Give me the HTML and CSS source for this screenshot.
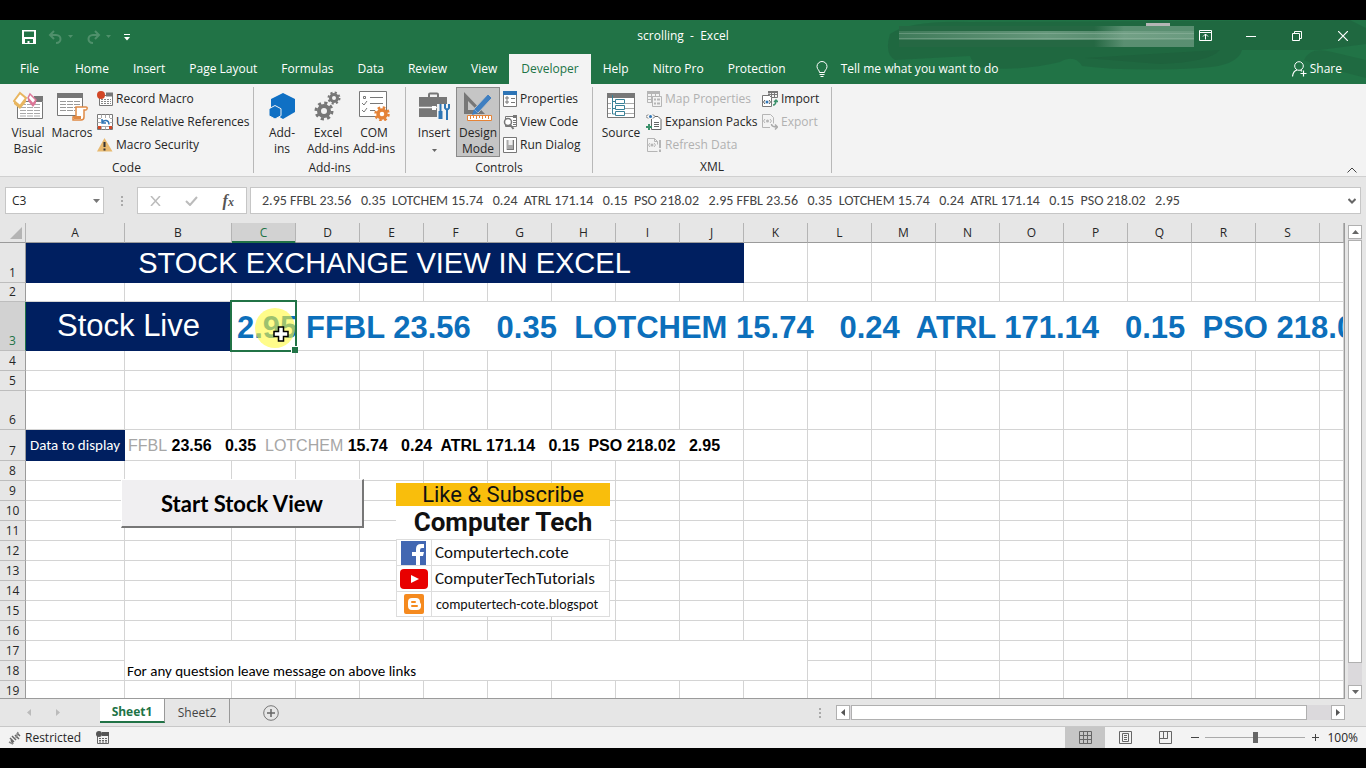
FILE: index.html
```html
<!DOCTYPE html>
<html lang="en">
<head>
<meta charset="UTF-8" />
<meta name="viewport" content="width=device-width, initial-scale=1" />
<title>scrolling - Excel</title>
<link rel="stylesheet" href="styles.css">
</head>
<body>
<header class="top">
  <svg class="smudge" width="486" height="64" viewBox="0 0 486 64" aria-hidden="true">
    <path d="M10 14 Q30 0 90 2 L470 0 L486 8 L486 24 L440 30 L362 30 Q358 46 320 48 Q250 52 202 46 Q195 34 180 42 Q140 52 95 47 L90 36 L15 40 Q4 34 10 14z" fill="#1b5135" opacity=".3"/>
    <path d="M424 40 Q430 26 452 32 L486 40 V58 L440 46z" fill="#1b5135" opacity=".25"/>
    <path d="M205 38 Q270 34 340 30 Q330 42 280 44z" fill="#1b5135" opacity=".25"/>
    <defs>
      <linearGradient id="streak"><stop offset="0" stop-color="#8fb59f" stop-opacity=".25"/><stop offset=".5" stop-color="#8fb59f" stop-opacity=".6"/><stop offset="1" stop-color="#8fb59f" stop-opacity=".3"/></linearGradient>
      <linearGradient id="fade"><stop offset="0" stop-color="#8fb59f" stop-opacity="0"/><stop offset=".3" stop-color="#8fb59f" stop-opacity=".5"/><stop offset="1" stop-color="#8fb59f" stop-opacity=".5"/></linearGradient>
    </defs>
    <path d="M19 6H314V27H19z" fill="#256843"/>
    <path d="M19 11H314V20H19z" fill="url(#streak)"/>
    <path d="M214 6H314V27H214z" fill="url(#fade)"/>
    <path d="M19 13.500H314M19 18.500H314" stroke="#a5c5b2" stroke-width="1" opacity=".35"/>
    <path d="M266 3H290V6H266z" fill="#b5b5b5"/>
  </svg>
  <div class="titlebar">
    <div class="quick">
      <button aria-label="Save"><svg width="14" height="14" viewBox="0 0 14 14"><path d="M0 0H14V14H0zM2 1.500V7H12V1.500zM3 9V13H5.500V11H7.500V13H11V9z" fill="#fff" fill-rule="evenodd"/></svg></button>
      <button class="off" aria-label="Undo"><svg width="26" height="14" viewBox="0 0 26 14"><path d="M6 1 2 5l4 4M2 5h6c6 0 6 8 0 8" fill="none" stroke="#4f906b" stroke-width="2"/><path d="M20 5h5l-2.500 3z" fill="#4f906b"/></svg></button>
      <button class="off" aria-label="Redo"><svg width="26" height="14" viewBox="0 0 26 14"><path d="M9 1l4 4-4 4M13 5H7c-6 0-6 8 0 8" fill="none" stroke="#4f906b" stroke-width="2"/><path d="M20 5h5l-2.500 3z" fill="#4f906b"/></svg></button>
      <button aria-label="Customize Quick Access Toolbar"><svg width="6" height="8" viewBox="0 0 6 8"><path d="M0 1.500h6" stroke="#fff"/><path d="M0 4h6L3 7.500z" fill="#fff"/></svg></button>
    </div>
    <div class="doc">scrolling&nbsp; -&nbsp; Excel</div>
    <div class="winbtns">
      <button aria-label="Ribbon Display Options"><svg width="13" height="11" viewBox="0 0 13 11"><path d="M.5.5h12v10H.5zM.5 2.500h12M6.500 9.500V4M4 6.500 6.500 4 9 6.500" fill="none" stroke="#fff"/></svg></button>
      <button aria-label="Minimize"><svg width="10" height="10" viewBox="0 0 10 10"><path d="M0 5.500h10" stroke="#fff"/></svg></button>
      <button aria-label="Restore"><svg width="10" height="10" viewBox="0 0 10 10"><path d="M.5 2.500h7v7h-7zM2.500 2.500v-2h7v7h-2" fill="none" stroke="#fff"/></svg></button>
      <button aria-label="Close"><svg width="10" height="10" viewBox="0 0 10 10"><path d="M0 0 10 10M10 0 0 10" stroke="#fff" stroke-width="1.200"/></svg></button>
    </div>
  </div>
  <nav class="tabs">
    <a class="file" href="#file">File</a>
    <a href="#home">Home</a>
    <a href="#insert">Insert</a>
    <a href="#layout">Page Layout</a>
    <a href="#formulas">Formulas</a>
    <a href="#data">Data</a>
    <a href="#review">Review</a>
    <a href="#view">View</a>
    <a class="active" href="#developer">Developer</a>
    <a href="#help">Help</a>
    <a href="#nitro">Nitro Pro</a>
    <a href="#protection">Protection</a>
    <a class="tell" href="#tell"><svg width="12" height="16" viewBox="0 0 12 16"><path d="M3.500 11.500C3.500 9 1 8.500 1 5.500a5 5 0 0 1 10 0c0 3-2.500 3.500-2.500 6zM3.500 13.500h5M4.500 15.500h3" fill="none" stroke="#fff"/></svg>Tell me what you want to do</a>
    <a class="share" href="#share"><svg width="15" height="16" viewBox="0 0 15 16"><circle cx="7" cy="5" r="4.300" fill="none" stroke="#fff"/><path d="M.5 15.500C1 11 3 9.500 5 9M8.500 9.200l1.500 1M11.500 9.500v6M8.500 12.500h6" fill="none" stroke="#fff" stroke-width="1.200"/></svg>Share</a>
  </nav>
</header>

<section class="ribbon">
  <div class="group code">
    <div class="tools">
      <button class="big"><svg width="30" height="28" viewBox="0 0 30 28"><path d="M4.500 9.500h25v17h-25z" fill="#fff" stroke="#777"/><path d="M21 4h9v5h-9z" fill="#777"/><path d="M7 12.500h21M7 15.500h21M7 18.500h21M7 21.500h21M7 24h21" stroke="#aaa" stroke-dasharray="6 1"/><path d="M7 1 13 6 7 14 1 9z" fill="#fff" stroke="#e8b660" stroke-width="2"/><path d="M1 9l6 5 6-8v4l-6 7-6-5z" fill="#e8b660"/><path d="M17 2l6 6-3 4-5-6z" fill="#fff" stroke="#dc7798" stroke-width="1.500"/><path d="M15 6l5 6 3-4v3l-3 4-5-6z" fill="#dc7798"/></svg><span>Visual<br>Basic</span></button>
      <button class="big"><svg width="32" height="28" viewBox="0 0 32 28"><path d="M1.500 1.500h25v22h-25z" fill="#fff" stroke="#777"/><path d="M1 1h26v5H1z" fill="#777"/><path d="M4 9.500h20M4 12.500h20M4 15.500h20M4 18.500h15" stroke="#999" stroke-dasharray="6 1"/><path d="M20 15h10c2 0 1 3 0 3h-2v7c0 3-2 3-3 3h-8v-3h3z" fill="#fff" stroke="#e08a45" stroke-width="1.500"/><path d="M17 24h8v3h-7z" fill="#e08a45"/></svg><span>Macros</span></button>
      <div class="stack">
        <button><svg width="16" height="16" viewBox="0 0 16 16"><path d="M2.500 4.500h13v10h-13z" fill="#fff" stroke="#777"/><path d="M9 1.500h7v4H9z" fill="#777"/><path d="M4 8.500h10M4 10.500h10M4 12.500h10" stroke="#888" stroke-dasharray="2 1"/><circle cx="4" cy="4" r="4" fill="#d24726"/></svg>Record Macro</button>
        <button><svg width="16" height="16" viewBox="0 0 16 16"><path d="M.5.5h15v15H.5z" fill="#fff" stroke="#777"/><path d="M.5 4.500h15M.5 8.500h15M.5 12.500h15M4.500.5v15M8.500.5v15M12.500.5v15" stroke="#aaa"/><path d="M4 4h9v8H4z" fill="#fff"/><path d="M1 12h3v3H1zM12 12h3v3h-3z" fill="#d24726"/><path d="M12 10.500c0-5-5-5-7-2M5 5v4h4" fill="none" stroke="#2e75b6" stroke-width="1.500"/></svg>Use Relative References</button>
        <button><svg width="16" height="16" viewBox="0 0 16 16"><path d="M7.500 1 15.500 14.500H0z" fill="#e8b96f"/><path d="M7.500 5v5M7.500 11.500v2" stroke="#333" stroke-width="2"/></svg>Macro Security</button>
      </div>
    </div>
    <div class="caption">Code</div>
  </div>
  <div class="group addins">
    <div class="tools spaced">
      <button class="big"><svg width="28" height="28" viewBox="0 0 28 28"><path d="M15 1 27 7V20L15 27 3 20V7z" fill="#0f70c4"/><path d="M7 13.500l6 3.200v7L7 27l-6-3.300v-7z" fill="#0f70c4" stroke="#f3f3f3"/></svg><span>Add-<br>ins</span></button>
      <button class="big"><svg width="28" height="30" viewBox="0 0 28 30"><circle cx="10" cy="20" r="5" fill="none" stroke="#777" stroke-width="4"/><circle cx="10" cy="20" r="8" fill="none" stroke="#777" stroke-width="3" stroke-dasharray="3.140 3.140"/><circle cx="20" cy="7" r="3.500" fill="none" stroke="#777" stroke-width="3"/><circle cx="20" cy="7" r="5.500" fill="none" stroke="#777" stroke-width="2" stroke-dasharray="2.160 2.160"/></svg><span>Excel<br>Add-ins</span></button>
      <button class="big"><svg width="32" height="30" viewBox="0 0 32 30"><path d="M1.500.5h27v25h-27z" fill="#fff" stroke="#777"/><path d="M5.500 5.500h2v2h-2zM4 12l2 2 3-4M4 19l2 2 3-4M12 6.500h13M12 12.500h13M12 19.500h5" fill="none" stroke="#777"/><circle cx="24" cy="23" r="4" fill="#fff" stroke="#e58337" stroke-width="3.500"/><circle cx="24" cy="23" r="6.500" fill="none" stroke="#e58337" stroke-width="2.500" stroke-dasharray="2.550 2.550"/></svg><span>COM<br>Add-ins</span></button>
    </div>
    <div class="caption">Add-ins</div>
  </div>
  <div class="group controls">
    <div class="tools">
      <button class="big"><svg width="32" height="30" viewBox="0 0 32 30"><path d="M11 6V3.500q0-1 1-1h7q1 0 1 1V6" fill="none" stroke="#777" stroke-width="2"/><path d="M1 6h28v20H1z" fill="#777"/><path d="M1 16.500h13m4 0h11" stroke="#f3f3f3" stroke-width="1.500"/><path d="M14 15h4v4h-4z" fill="#fff"/><path d="M19 13h13v16H19z" fill="#f3f3f3"/><path d="M22.500 13v7" stroke="#2f76b5" stroke-width="2"/><path d="M22.500 20v8" stroke="#2f76b5" stroke-width="4"/><path d="M29 18v11M27 13v4q2 3 4 0v-4" fill="none" stroke="#2f76b5" stroke-width="2"/></svg><span>Insert</span><svg class="drop" width="5" height="3" viewBox="0 0 5 3"><path d="M0 0h5L2.500 3z" fill="#666"/></svg></button>
      <button class="big pressed"><svg width="32" height="30" viewBox="0 0 32 30"><path d="M2 1 23 23H2zM6 10v9h9z" fill="#777" fill-rule="evenodd"/><path d="M12 18 26 3l4 4-14 15z" fill="#3f7fc1" stroke="#c5c5c5"/><path d="M12 18l4 4-6 2z" fill="#3f7fc1"/><path d="M5.500 24.500h24v5h-24z" fill="#fff" stroke="#e58337"/><path d="M8.500 25v3M11.500 25v2M14.500 25v3M17.500 25v2M20.500 25v3M23.500 25v2M26.500 25v3" stroke="#e58337"/></svg><span>Design<br>Mode</span></button>
      <div class="stack">
        <button><svg width="14" height="16" viewBox="0 0 14 16"><path d="M.5.5h13v15H.5z" fill="#fff" stroke="#777"/><path d="M0 0h14v4H0z" fill="#2e75b6"/><path d="M3 6h2v2H3zM3 10h2v2H3z" fill="none" stroke="#777"/><path d="M8 7.500h4M8 11.500h4" stroke="#777"/></svg>Properties</button>
        <button><svg width="14" height="16" viewBox="0 0 14 16"><path d="M2.500 2.500h11v10h-11z" fill="#fff" stroke="#777"/><path d="M10 1h4v3h-4z" fill="#777"/><path d="M10 6.500h3M10 8.500h3M10 10.500h3" stroke="#777"/><circle cx="5" cy="8" r="3.500" fill="#fff" stroke="#777" stroke-width="1.500"/><path d="M7 10.500 10.500 15" stroke="#777" stroke-width="2"/></svg>View Code</button>
        <button><svg width="14" height="16" viewBox="0 0 14 16"><path d="M.5.5h13v15H.5z" fill="#fff" stroke="#777"/><path d="M3.500 3h7v10h-7z" fill="#aaa"/><path d="M5.500 3h4v5h-4z" fill="#eee"/><path d="M10.500 3v10M4 12.500h7" stroke="#777"/></svg>Run Dialog</button>
      </div>
    </div>
    <div class="caption">Controls</div>
  </div>
  <div class="group xml">
    <div class="tools">
      <button class="big"><svg width="30" height="28" viewBox="0 0 30 28"><path d="M1.500 1.500h27v24h-27z" fill="#fff" stroke="#777"/><path d="M1 1h28v5H1z" fill="#777"/><path d="M19 11.500h9M19 16.500h9M19 21.500h9M2 11.500h3M2 16.500h3M2 21.500h3" stroke="#aaa"/><path d="M6.500 3v19h3M6.500 9.500h3M6.500 16.500h3M9.500 7.500h9v4h-9zM9.500 13.500h9v4h-9zM9.500 19.500h9v4h-9z" fill="#fff" stroke="#3a8298"/></svg><span>Source</span></button>
      <div class="stack first">
        <button disabled><svg width="16" height="16" viewBox="0 0 16 16"><path d="M1.500.5h12v11h-12zM1 5.500h12M1 8.500h12M5.500.5v11M9.500.5v11" fill="none" stroke="#b5b5b5"/><path d="M1 0h13v3H1z" fill="#b5b5b5"/><path d="M6.500 5.500h9v10h-9z" fill="#f3f3f3" stroke="#b5b5b5"/><path d="M8 8.500h2M8 12.500h2M11 8.500h3M11 12.500h3" stroke="#b5b5b5" stroke-width="2"/></svg>Map Properties</button>
        <button><svg width="16" height="16" viewBox="0 0 16 16"><path d="M9 2.500h3l3 3v10H5.500V5" fill="#fff" stroke="#666"/><path d="M8 8.500h5M8 10.500h5M8 12.500h5" stroke="#666"/><path d="M2 .5 0 2.500l2 2M7 .5l2 2-2 2" fill="none" stroke="#666"/><circle cx="4.500" cy="2.500" r="1.500" fill="#2e75b6"/><path d="M3 10v6M0 13h6" stroke="#3b916b" stroke-width="2"/></svg>Expansion Packs</button>
        <button disabled><svg width="16" height="16" viewBox="0 0 16 16"><path d="M11.500 14.500h-10v-13h7l3 3v3M8.500 1.500v3h3" fill="none" stroke="#b5b5b5"/><path d="M4 6 2.500 8 4 10M8 6l1.500 2L8 10" fill="none" stroke="#b5b5b5"/><circle cx="6" cy="8" r="1.500" fill="#b5b5b5"/><path d="M14 3v8M14 12.500v2.500" stroke="#b5b5b5" stroke-width="2"/></svg>Refresh Data</button>
      </div>
      <div class="stack">
        <button><svg width="16" height="16" viewBox="0 0 16 16"><path d="M7 .5h8.500v6H7zM6 3.500h9M9.500.5v6M12.500.5v6" fill="none" stroke="#777"/><path d="M6 0h10v2H6z" fill="#777"/><path d="M.5 4.500h7l2 2v9H.5z" fill="#fff" stroke="#777"/><path d="M3 9 1.500 11 3 13M7 9l1.500 2L7 13" fill="none" stroke="#555"/><circle cx="5" cy="11" r="1.500" fill="#2e75b6"/><path d="M11 14q3 0 3-5M12 11l2-2 2 2" fill="none" stroke="#3b916b" stroke-width="1.500"/></svg>Import</button>
        <button disabled><svg width="16" height="16" viewBox="0 0 16 16"><path d="M8 13.500H.5V.5h8l3 3v6" fill="none" stroke="#b5b5b5"/><path d="M3 5 1.500 7 3 9M8 5l1.500 2L8 9" fill="none" stroke="#b5b5b5"/><circle cx="5.500" cy="7" r="1.500" fill="#b5b5b5"/><path d="M9.500 10q0 3 5.500 3M13 10.500l2.500 2.500L13 15.500" fill="none" stroke="#aaa" stroke-width="1.500"/></svg>Export</button>
      </div>
    </div>
    <div class="caption">XML</div>
  </div>
  <button class="collapse" aria-label="Collapse the Ribbon"><svg width="10" height="6" viewBox="0 0 10 6"><path d="M.5 5.500 5 1l4.500 4.500" fill="none" stroke="#444"/></svg></button>
</section>

<section class="formula">
  <div class="namebox">
    <input aria-label="Name Box" value="C3">
    <button aria-label="Names"><svg width="7" height="4" viewBox="0 0 7 4"><path d="M0 0h7L3.500 4z" fill="#777"/></svg></button>
  </div>
  <span class="dots"></span>
  <div class="fx">
    <button aria-label="Cancel"><svg width="11" height="10" viewBox="0 0 11 10"><path d="M1 0l9 10M10 0 1 10" stroke="#bbb" stroke-width="1.500"/></svg></button>
    <button aria-label="Enter"><svg width="13" height="10" viewBox="0 0 13 10"><path d="M1 5l4 4 7-8" fill="none" stroke="#bbb" stroke-width="2"/></svg></button>
    <button class="fn" aria-label="Insert Function"><i>f</i><i class="x">x</i></button>
  </div>
  <div class="fbox">
    <input aria-label="Formula Bar" value="2.95 FFBL 23.56   0.35  LOTCHEM 15.74   0.24  ATRL 171.14   0.15  PSO 218.02   2.95 FFBL 23.56   0.35  LOTCHEM 15.74   0.24  ATRL 171.14   0.15  PSO 218.02   2.95">
    <button aria-label="Expand Formula Bar"><svg width="8" height="6" viewBox="0 0 8 6"><path d="M.5 1 4 4.500 7.500 1" fill="none" stroke="#666" stroke-width="2"/></svg></button>
  </div>
</section>

<main class="book">
  <div class="sheet">
    <table>
      <colgroup><col class="rh"><col class="ca"><col class="cb"><col span="17" class="cc"><col></colgroup>
      <thead>
        <tr><th class="corner"><svg width="12" height="12" viewBox="0 0 12 12"><path d="M12 0V12H0z" fill="#b4b4b4"/></svg></th><th>A</th><th>B</th><th class="sel">C</th><th>D</th><th>E</th><th>F</th><th>G</th><th>H</th><th>I</th><th>J</th><th>K</th><th>L</th><th>M</th><th>N</th><th>O</th><th>P</th><th>Q</th><th>R</th><th>S</th><th></th></tr>
      </thead>
      <tbody>
        <tr class="r1" data-blank="10"><th>1</th><td class="navy heading" colspan="10">STOCK EXCHANGE VIEW IN EXCEL</td></tr>
        <tr class="r2" data-blank="20"><th>2</th></tr>
        <tr class="r3"><th class="sel">3</th><td class="navy heading live" colspan="2">Stock Live</td><td class="ticker" colspan="18">2.95 FFBL 23.56   0.35  LOTCHEM 15.74   0.24  ATRL 171.14   0.15  PSO 218.02</td></tr>
        <tr data-blank="20"><th>4</th></tr>
        <tr data-blank="20"><th>5</th></tr>
        <tr class="r6" data-blank="20"><th>6</th></tr>
        <tr class="r7" data-blank="10"><th>7</th><td class="navy label">Data to display</td><td class="source" colspan="9"><span>FFBL</span> 23.56   0.35  <span>LOTCHEM</span> 15.74   0.24  ATRL 171.14   0.15  PSO 218.02   2.95</td></tr>
        <tr data-blank="20"><th>8</th></tr>
        <tr data-blank="20"><th>9</th></tr>
        <tr data-blank="20"><th>10</th></tr>
        <tr data-blank="20"><th>11</th></tr>
        <tr data-blank="20"><th>12</th></tr>
        <tr data-blank="20"><th>13</th></tr>
        <tr data-blank="20"><th>14</th></tr>
        <tr data-blank="20"><th>15</th></tr>
        <tr data-blank="20"><th>16</th></tr>
        <tr data-blank="9"><th>17</th><td></td><td class="note" colspan="10" rowspan="2">For any questsion leave message on above links</td></tr>
        <tr data-blank="10"><th>18</th></tr>
        <tr data-blank="20"><th>19</th></tr>
      </tbody>
    </table>
    <div class="selection"></div>
    <div class="halo"></div>
    <svg class="pointer" width="16" height="16" viewBox="0 0 16 16"><path d="M5.500 1h5v4.500H15v5h-4.500V15h-5v-4.500H1v-5h4.500z" fill="#fff" stroke="#000" stroke-width="1.500"/></svg>
    <button class="start">Start Stock View</button>
    <div class="card">
      <div class="like">Like &amp; Subscribe</div>
      <div class="brand">Computer Tech</div>
      <a href="#facebook"><span><svg width="26" height="24" viewBox="0 0 26 24"><path d="M0 0h25v24H0z" fill="#4267b2"/><path d="M15 24v-9h-4v-4h4V8q0-5 5-5h3v4h-2q-2 0-2 2v2h4l-1 4h-3v9z" fill="#fff"/></svg></span>Computertech.cote</a>
      <a href="#youtube"><span><svg width="28" height="20" viewBox="0 0 28 20"><rect width="28" height="20" rx="4" fill="#e80000"/><path d="M11 6l8 4-8 4z" fill="#fff"/></svg></span>ComputerTechTutorials</a>
      <a class="small" href="#blog"><span><svg width="20" height="20" viewBox="0 0 20 20"><rect width="20" height="20" rx="2" fill="#f58a1f"/><path d="M8 4h4q4 0 4 4 0 1 1 2v2q0 4-4 4H8q-4 0-4-4V8q0-4 4-4z" fill="#fff"/><path d="M8 8h3M8 12h5" stroke="#f58a1f" stroke-width="2" stroke-linecap="round"/></svg></span>computertech-cote.blogspot</a>
    </div>
  </div>
  <div class="vscroll">
    <button aria-label="Scroll up"><svg width="7" height="4" viewBox="0 0 7 4"><path d="M0 4h7L3.500 0z" fill="#666"/></svg></button>
    <div class="track"><div class="thumb"></div></div>
    <button aria-label="Scroll down"><svg width="7" height="4" viewBox="0 0 7 4"><path d="M0 0h7L3.500 4z" fill="#666"/></svg></button>
  </div>
</main>

<section class="sheetbar">
  <div class="arrows">
    <button aria-label="Previous sheet"><svg width="4" height="7" viewBox="0 0 4 7"><path d="M4 0v7L0 3.500z" fill="#bbb"/></svg></button>
    <button aria-label="Next sheet"><svg width="4" height="7" viewBox="0 0 4 7"><path d="M0 0v7l4-3.500z" fill="#bbb"/></svg></button>
  </div>
  <button class="stab on">Sheet1</button>
  <button class="stab">Sheet2</button>
  <button class="add" aria-label="New sheet"><svg width="16" height="16" viewBox="0 0 16 16"><circle cx="8" cy="8" r="7.300" fill="none" stroke="#777"/><path d="M8 4v8M4 8h8" stroke="#666" stroke-width="1.500"/></svg></button>
  <span class="dots"></span>
  <div class="hscroll">
    <button aria-label="Scroll left"><svg width="4" height="7" viewBox="0 0 4 7"><path d="M4 0v7L0 3.500z" fill="#555"/></svg></button>
    <div class="track"><div class="thumb"></div></div>
    <button aria-label="Scroll right"><svg width="4" height="7" viewBox="0 0 4 7"><path d="M0 0v7l4-3.500z" fill="#555"/></svg></button>
  </div>
</section>

<footer class="status">
  <svg width="14" height="14" viewBox="0 0 14 14"><path d="M2 7l4 4M4 5l4 4M7 4l4 4M9 2l3 3M3 9l2 4" stroke="#666" stroke-width="1.500"/><path d="M1 11l4 2M10 1l-2 6" stroke="#888" stroke-width="1.500"/></svg>
  <span class="mode">Restricted</span>
  <button class="rec" aria-label="Record Macro"><svg width="14" height="14" viewBox="0 0 14 14"><path d="M1.500 5v7.500h11V2.500H7" fill="none" stroke="#666"/><path d="M6 1h7v4H6z" fill="#555"/><path d="M3 7.500h8M3 9.500h8M3 11h8" stroke="#666" stroke-dasharray="2 1"/><circle cx="3" cy="3" r="3" fill="#555"/></svg></button>
  <div class="views">
    <button class="on" aria-label="Normal"><svg width="13" height="13" viewBox="0 0 13 13"><path d="M.5.5h12v12H.5zM.5 4.500h12M.5 8.500h12M4.500.5v12M8.500.5v12" fill="none" stroke="#666"/></svg></button>
    <button aria-label="Page Layout"><svg width="13" height="13" viewBox="0 0 13 13"><path d="M.5.5h12v12H.5zM3.500 2.500h6v8h-6zM5 4.500h3M5 6.500h3M5 8.500h3" fill="none" stroke="#666"/></svg></button>
    <button aria-label="Page Break Preview"><svg width="13" height="13" viewBox="0 0 13 13"><path d="M.5.5h12v12H.5zM4.500.5v7h4v-7M.5 7.500h8" fill="none" stroke="#666"/></svg></button>
  </div>
  <button class="zoom" aria-label="Zoom out"><svg width="8" height="8" viewBox="0 0 8 8"><path d="M0 3.500h8" stroke="#444"/></svg></button>
  <input type="range" aria-label="Zoom" min="0" max="200" value="100">
  <button class="zoom" aria-label="Zoom in"><svg width="7" height="7" viewBox="0 0 7 7"><path d="M0 3.500h7M3.500 0v7" stroke="#444"/></svg></button>
  <span class="percent">100%</span>
</footer>

<script>
  // fill each row with its empty cells
  document.querySelectorAll("tr[data-blank]").forEach(row => {
    for (let i = 0; i < row.dataset.blank; i++) {
      row.appendChild(document.createElement("td"));
    }
  });
</script>
</body>
</html>
```
FILE: styles.css
```css
* {
  box-sizing: border-box;
}
body {
  margin: 0;
  height: 100vh;
  padding: 20px 0;
  background: #000;
  display: flex;
  flex-direction: column;
  font-family: "Segoe UI", "Open Sans", "Noto Sans", sans-serif;
  font-size: 12px;
  color: #262626;
  overflow: hidden;
}
button, input {
  font: inherit;
  color: inherit;
  background: none;
  border: none;
  padding: 0;
  margin: 0;
  outline: none;
}
button {
  display: flex;
  align-items: center;
  justify-content: center;
}
a {
  color: inherit;
  text-decoration: none;
}
svg {
  display: block;
  flex: none;
}

/* title bar and tabs */
.top {
  position: relative;
  background: #217346;
  color: #fff;
  flex: none;
}
.smudge {
  position: absolute;
  top: 0;
  right: 0;
}
.titlebar {
  position: relative;
  height: 34px;
  padding-bottom: 3px;
  display: grid;
  grid-template-columns: 1fr auto 1fr;
  align-items: center;
}
.quick {
  display: flex;
  align-items: center;
  gap: 12px;
  padding: 2px 0 0 22px;
}
.quick .off {
  width: 26px;
}
.winbtns {
  display: flex;
  justify-content: flex-end;
}
.winbtns button {
  width: 46px;
}
.tabs {
  position: relative;
  display: flex;
  height: 30px;
  line-height: 30px;
}
.tabs a {
  padding: 0 12px;
  white-space: nowrap;
}
.tabs .file {
  padding: 0 24px 0 20px;
}
.tabs .active {
  background: #f3f3f3;
  color: #217346;
}
.tabs .tell, .tabs .share {
  display: flex;
  align-items: center;
  gap: 13px;
  padding-left: 18px;
}
.tabs .share {
  gap: 3px;
  margin-left: auto;
  padding-right: 24px;
}

/* ribbon */
.ribbon {
  display: flex;
  flex: none;
  height: 93px;
  padding: 3px 0;
  background: #f3f3f3;
  border-bottom: 1px solid #d0d0d0;
}
.group {
  display: flex;
  flex-direction: column;
  border-right: 1px solid #b8b8b8;
  padding-left: 6px;
}
.code { width: 254px; }
.addins { width: 152px; }
.controls { width: 187px; }
.xml { width: 239px; }
.tools {
  display: flex;
  height: 70px;
}
.spaced {
  gap: 2px;
}
.caption {
  line-height: 22px;
  height: 17px;
  text-align: center;
  padding-right: 6px;
}
.big {
  width: 44px;
  flex-direction: column;
  justify-content: flex-start;
  padding-top: 4px;
  line-height: 16px;
  gap: 4px;
  white-space: nowrap;
}
.big > svg:first-child {
  height: 30px;
}
.big .drop {
  margin-top: 4px;
}
.big.pressed {
  background: #c5c5c5;
  outline: 1px solid #8a8a8a;
  outline-offset: -1px;
}
.stack {
  display: flex;
  flex-direction: column;
  padding-left: 3px;
}
.stack.first {
  min-width: 116px;
}
.stack button {
  height: 23px;
  gap: 3px;
  justify-content: flex-start;
  white-space: nowrap;
}
.stack button:disabled {
  color: #b1b1b1;
}
.collapse {
  margin-left: auto;
  align-self: flex-end;
  padding: 0 9px 0;
}

/* formula bar */
.formula {
  display: flex;
  flex: none;
  height: 46px;
  padding: 10px 5px 9px;
  background: #e6e6e6;
}
.formula > div {
  display: flex;
  align-items: center;
  background: #fff;
  border: 1px solid #c6c6c6;
}
.namebox {
  width: 99px;
  padding: 0 3px 0 6px;
}
.namebox input {
  width: 100%;
}
.dots {
  width: 2px;
  height: 10px;
  background: repeating-linear-gradient(#aaa 0 2px, transparent 2px 4px);
  align-self: center;
}
.formula .dots {
  margin: 0 14px 0 17px;
}
.fx {
  width: 110px;
  justify-content: space-around;
}
.fn {
  font-family: "Liberation Serif", serif;
  font-size: 16px;
  font-weight: bold;
  color: #555;
}
.fn .x {
  font-size: 12px;
  padding-top: 4px;
}
.fbox {
  flex: 1;
  margin-left: 3px;
  padding: 0 4px 0 11px;
}
.fbox input {
  flex: 1;
  min-width: 0;
  font-family: Calibri, Lato, sans-serif;
  font-size: 14px;
  color: #444;
}

/* grid */
.book {
  flex: 1;
  min-height: 0;
  display: flex;
  background: #e6e6e6;
}
.sheet {
  position: relative;
  flex: 1;
  min-width: 0;
  overflow: hidden;
  border-right: 1px solid #9b9b9b;
  border-bottom: 1px solid #9b9b9b;
  background: #fff;
}
table {
  width: 100%;
  table-layout: fixed;
  border-collapse: separate;
  border-spacing: 0;
}
.rh { width: 26px; }
.ca { width: 99px; }
.cb { width: 107px; }
.cc { width: 64px; }
tr {
  height: 20px;
}
.r1 { height: 40px; }
.r2 { height: 19px; }
.r3 { height: 49px; }
.r6 { height: 39px; }
.r7 { height: 31px; }
th, td {
  padding: 0;
  line-height: 18px;
  border-right: 1px solid #d4d4d4;
  border-bottom: 1px solid #d4d4d4;
}
th {
  background: #e6e6e6;
  font-weight: normal;
  border-right-color: #9b9b9b;
  border-bottom-color: #bdbdbd;
  vertical-align: bottom;
}
thead th {
  border-right-color: #b4b4b4;
  border-bottom-color: #9b9b9b;
}
th.sel {
  background: #d2d2d2;
  color: #217346;
}
thead th.sel {
  box-shadow: inset 0 -1px #217346;
  border-bottom-color: #217346;
}
tbody th.sel {
  border-right-color: #217346;
}
.corner svg {
  margin: 0 3px 3px auto;
}
.navy {
  background: #001f60;
  border-color: #001f60;
  color: #fff;
  text-align: center;
}
.heading {
  font-family: "Liberation Sans", Arial, sans-serif;
  font-size: 29px;
  line-height: 34px;
}
.heading.live {
  font-size: 31px;
}
.label {
  font-family: Calibri, Lato, sans-serif;
  font-size: 15px;
  white-space: nowrap;
}
.ticker, .source {
  font-family: "Liberation Sans", Arial, sans-serif;
  font-weight: bold;
  white-space: pre;
  overflow: hidden;
}
.ticker {
  font-size: 31px;
  line-height: 36px;
  color: #0c6fbb;
  padding: 3px 0 0 5px;
}
.source {
  font-size: 16px;
  color: #000;
  padding: 2px 0 0 3px;
}
.source span {
  font-weight: normal;
  color: #a6a6a6;
}
.note {
  font-family: Calibri, Lato, sans-serif;
  font-size: 15px;
  color: #000;
  vertical-align: bottom;
  padding-left: 2px;
}

/* things that float over the cells */
.selection {
  position: absolute;
  left: 230px;
  top: 77px;
  width: 67px;
  height: 52px;
  border: 2px solid #217346;
}
.selection::after {
  content: "";
  position: absolute;
  right: -3px;
  bottom: -3px;
  width: 6px;
  height: 6px;
  background: #217346;
  border: 1px solid #fff;
  border-width: 1px 0 0 1px;
}
.halo {
  position: absolute;
  left: 255px;
  top: 85px;
  width: 40px;
  height: 40px;
  border-radius: 50%;
  background: rgba(255, 250, 60, 0.6);
}
.pointer {
  position: absolute;
  left: 273px;
  top: 103px;
}
.start {
  position: absolute;
  left: 121px;
  top: 256px;
  width: 243px;
  height: 49px;
  background: #f0eff1;
  border: 1px solid #fff;
  border-right: 2px solid #777;
  border-bottom: 2px solid #777;
  font-family: "Century Gothic", Lato, sans-serif;
  font-size: 22px;
  font-weight: bold;
  color: #000;
}
.card {
  position: absolute;
  left: 396px;
  top: 260px;
  width: 214px;
  background: #fff;
  color: #111;
  font-family: Calibri, Lato, sans-serif;
  font-size: 17px;
}
.like, .brand {
  font-family: Bahnschrift, Roboto, sans-serif;
  text-align: center;
}
.like {
  background: #f9be0c;
  font-size: 22px;
  line-height: 23px;
}
.brand {
  font-size: 26px;
  font-weight: bold;
  line-height: 33px;
}
.card a {
  display: flex;
  align-items: center;
  height: 26px;
  gap: 3px;
  border: 1px solid #ddd;
  border-bottom: none;
}
.card a:last-child {
  border-bottom: 1px solid #ddd;
}
.card a span {
  display: flex;
  align-items: center;
  justify-content: center;
  flex: none;
  width: 35px;
  height: 100%;
  border-right: 1px solid #ddd;
}
.card .small {
  font-size: 14px;
  gap: 4px;
}

/* scrollbars */
.vscroll, .hscroll {
  display: flex;
}
.vscroll {
  flex-direction: column;
  width: 14px;
  margin: 2px 4px 0 3px;
}
.vscroll button, .hscroll button {
  width: 14px;
  height: 14px;
  flex: none;
  background: #fff;
  border: 1px solid #b0b0b0;
}
.track {
  flex: 1;
  display: flex;
  background: #dbd9dc;
}
.thumb {
  background: #fff;
  border: 1px solid #b0b0b0;
}
.vscroll .track {
  flex-direction: column;
  padding-top: 1px;
}
.vscroll .thumb {
  height: 95%;
}
.hscroll .track {
  padding-left: 1px;
}
.hscroll .thumb {
  width: 95%;
}

/* sheet tabs */
.sheetbar {
  display: flex;
  flex: none;
  align-items: center;
  height: 28px;
  background: #e6e6e6;
  border-bottom: 1px solid #c8c8c8;
}
.arrows {
  display: flex;
  justify-content: space-between;
  width: 100px;
  padding: 0 40px 0 27px;
}
.stab {
  width: 65px;
  height: 24px;
  align-self: flex-start;
  padding-top: 2px;
  color: #444;
  border-right: 1px solid #999;
}
.stab.on {
  background: #fff;
  color: #217346;
  font-weight: bold;
  border-bottom: 2px solid #217346;
}
.add {
  margin-left: 33px;
}
.sheetbar .dots {
  margin: 0 15px 0 auto;
}
.hscroll {
  width: 509px;
  margin-right: 21px;
}
.hscroll button {
  height: 15px;
}

/* status bar */
.status {
  display: flex;
  flex: none;
  align-items: center;
  height: 21px;
  padding: 0 8px;
  background: #f3f3f3;
}
.mode {
  margin-left: 3px;
}
.rec {
  margin-left: 15px;
}
.views {
  display: flex;
  margin-left: auto;
}
.views button {
  width: 40px;
  height: 21px;
}
.views .on {
  background: #c6c6c6;
}
.zoom {
  width: 20px;
  height: 20px;
}
.status input {
  appearance: none;
  width: 100px;
  height: 12px;
  background: linear-gradient(#aaa, #aaa) center / 100% 1px no-repeat;
}
.status input::-webkit-slider-thumb {
  appearance: none;
  width: 5px;
  height: 11px;
  background: #666;
}
.percent {
  width: 33px;
  text-align: right;
}
```
